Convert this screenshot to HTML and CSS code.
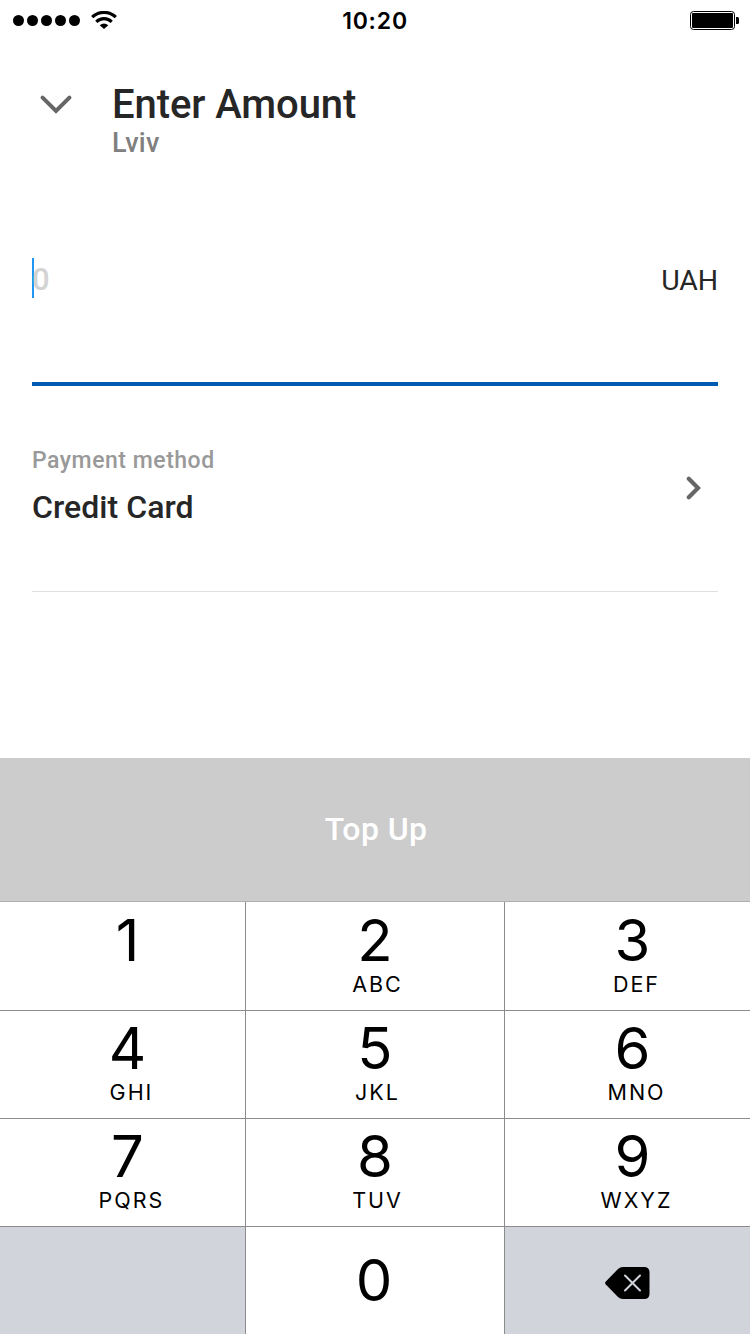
FILE: index.html
```html
<!DOCTYPE html>
<html lang="en">
<head>
<meta charset="utf-8">
<title>Enter Amount</title>
<link rel="stylesheet" href="styles.css">
</head>
<body>
<div class="screen">
  <header class="status">
    <div class="signal">
      <svg width="68" height="12" viewBox="0 0 68 12"><circle cx="5.5" cy="5.5" r="5.5"/><circle cx="19.5" cy="5.5" r="5.5"/><circle cx="33.5" cy="5.5" r="5.5"/><circle cx="47.5" cy="5.5" r="5.5"/><circle cx="61.5" cy="5.5" r="5.5"/></svg>
      <svg class="wifi" width="26" height="19" viewBox="0 0 26 19"><path d="M1.2 6.200a17 17 0 0 1 23.600 0M5.300 10.800a11 11 0 0 1 15.400 0" fill="none" stroke="#000" stroke-width="3.200"/><path d="M8.700 14.200q4.300-3.400 8.600 0L13 18z"/></svg>
    </div>
    <div class="clock">10:20</div>
    <svg class="battery" width="49" height="19" viewBox="0 0 49 19"><rect x=".5" y=".5" width="44" height="18" rx="3" fill="none" stroke="#000"/><rect x="2" y="2" width="41" height="15" rx="1"/><path d="M46 6h1.500q1.500 0 1.500 1.500v4q0 1.500-1.500 1.500H46z"/></svg>
  </header>
  <section class="heading">
    <svg class="down" width="32" height="20" viewBox="0 0 32 20"><path d="M2.600 2.600L16 15.900L29.400 2.600" fill="none" stroke="#666" stroke-width="4" stroke-linecap="round"/></svg>
    <div><h1>Enter Amount</h1><p>Lviv</p></div>
  </section>
  <section class="amount">
    <div class="entry"><span class="caret"></span><span class="placeholder">0</span></div>
    <span class="currency">UAH</span>
  </section>
  <section class="method">
    <div><div class="label">Payment method</div><div class="value">Credit Card</div></div>
    <svg class="next" width="16" height="24" viewBox="0 0 16 24"><path d="M2.800 2.800L12 12L2.800 21.200" fill="none" stroke="#666" stroke-width="4.200" stroke-linecap="round"/></svg>
  </section>
  <button class="topup">Top Up</button>
  <div class="keypad">
    <div class="key left"><b>1</b></div><div class="key"><b>2</b><i>ABC</i></div><div class="key right"><b>3</b><i>DEF</i></div>
    <div class="key left"><b>4</b><i>GHI</i></div><div class="key"><b>5</b><i>JKL</i></div><div class="key right"><b>6</b><i>MNO</i></div>
    <div class="key left"><b>7</b><i>PQRS</i></div><div class="key"><b>8</b><i>TUV</i></div><div class="key right"><b>9</b><i>WXYZ</i></div>
    <div class="key gray"></div><div class="key zero"><b>0</b></div>
    <div class="key gray erase"><svg width="45" height="32" viewBox="0 0 45 32"><path d="M.6 17.200Q-.4 16 .6 14.800L13 2Q15 0 18 0H39Q44.500 0 44.500 5.500V26.500Q44.500 32 39 32H18Q15 32 13 30Z"/><path d="M20 8.500l15 15M35 8.500L20 23.500" stroke="#d1d4db" stroke-width="2" stroke-linecap="round"/></svg></div>
  </div>
</div>
</body>
</html>
```
FILE: styles.css
```css
* { box-sizing: border-box; }
body { margin: 0; background: #fff; }
h1, p { margin: 0; }
svg { display: block; }
.screen { width: 750px; height: 1334px; display: flex; flex-direction: column; overflow: hidden; font-family: Roboto, sans-serif; color: #262626; }
.status { height: 41px; flex: none; display: grid; grid-template-columns: 1fr auto 1fr; align-items: center; padding: 0 11px 0 13px; color: #000; }
.signal { display: flex; align-items: center; gap: 10px; }
.clock { font: 600 23px/40px Inter, sans-serif; letter-spacing: .8px; padding: 1px 2px 0 0; }
.battery { justify-self: end; }
.heading { height: 217px; flex: none; display: flex; padding: 42px 0 0 40px; }
.heading .down { margin: 12px 40px 0 0; }
h1 { font-size: 40px; font-weight: 500; line-height: 44px; letter-spacing: -.08px; }
.heading p { font-size: 27px; font-weight: 500; line-height: 32px; letter-spacing: .3px; color: #808080; }
.amount { height: 128px; flex: none; margin: 0 32px; display: flex; justify-content: space-between; border-bottom: 4px solid #005bb5; }
.entry { display: flex; height: 40px; }
.caret { width: 2px; height: 40px; background: #2196f3; }
.placeholder { margin-left: -2px; font-size: 31px; font-weight: 500; line-height: 43px; color: #d3d3d3; }
.currency { font-size: 28.5px; line-height: 46px; letter-spacing: -.1px; }
.method { height: 206px; flex: none; margin: 0 32px; padding-top: 59px; display: flex; justify-content: space-between; border-bottom: 1px solid #e0e0e0; }
.label { font-size: 23px; line-height: 32px; font-weight: 500; letter-spacing: .52px; color: #999; }
.value { font-size: 32px; line-height: 40px; font-weight: 500; margin-top: 10px; letter-spacing: .05px; }
.next { margin: 31px 16px 0 0; }
.topup { height: 143px; flex: none; margin: 166px 0 0; padding: 0 0 2px 2px; border: 0; background: #ccc; color: #fff; font: 500 32px/40px Roboto, sans-serif; letter-spacing: .4px; }
.keypad { flex: 1; display: grid; grid-template-columns: 245px 258px 245px; grid-template-rows: 108px repeat(3, 107px); gap: 1px; border-top: 1px solid #b0b0b0; background: #8c8c8c; font-family: Inter, sans-serif; color: #000; }
.key { background: #fff; display: flex; flex-direction: column; align-items: center; padding-top: 9px; }
.key:nth-child(-n+3) { padding-top: 10px; }
.key.left { padding-left: 10px; }
.key.right { padding-left: 10px; }
.key b { font-size: 58px; line-height: 56px; font-weight: 400; }
.key i { font-size: 21.5px; line-height: 28px; font-style: normal; letter-spacing: 2px; margin-top: 2px; padding-left: 5px; }
.key.left i, .key.right i { padding-left: 8px; }
.key.zero { padding: 25px 2px 0 0; }
.key.gray { background: #d1d4db; }
.key.erase { padding: 40px 0 0; }
```
